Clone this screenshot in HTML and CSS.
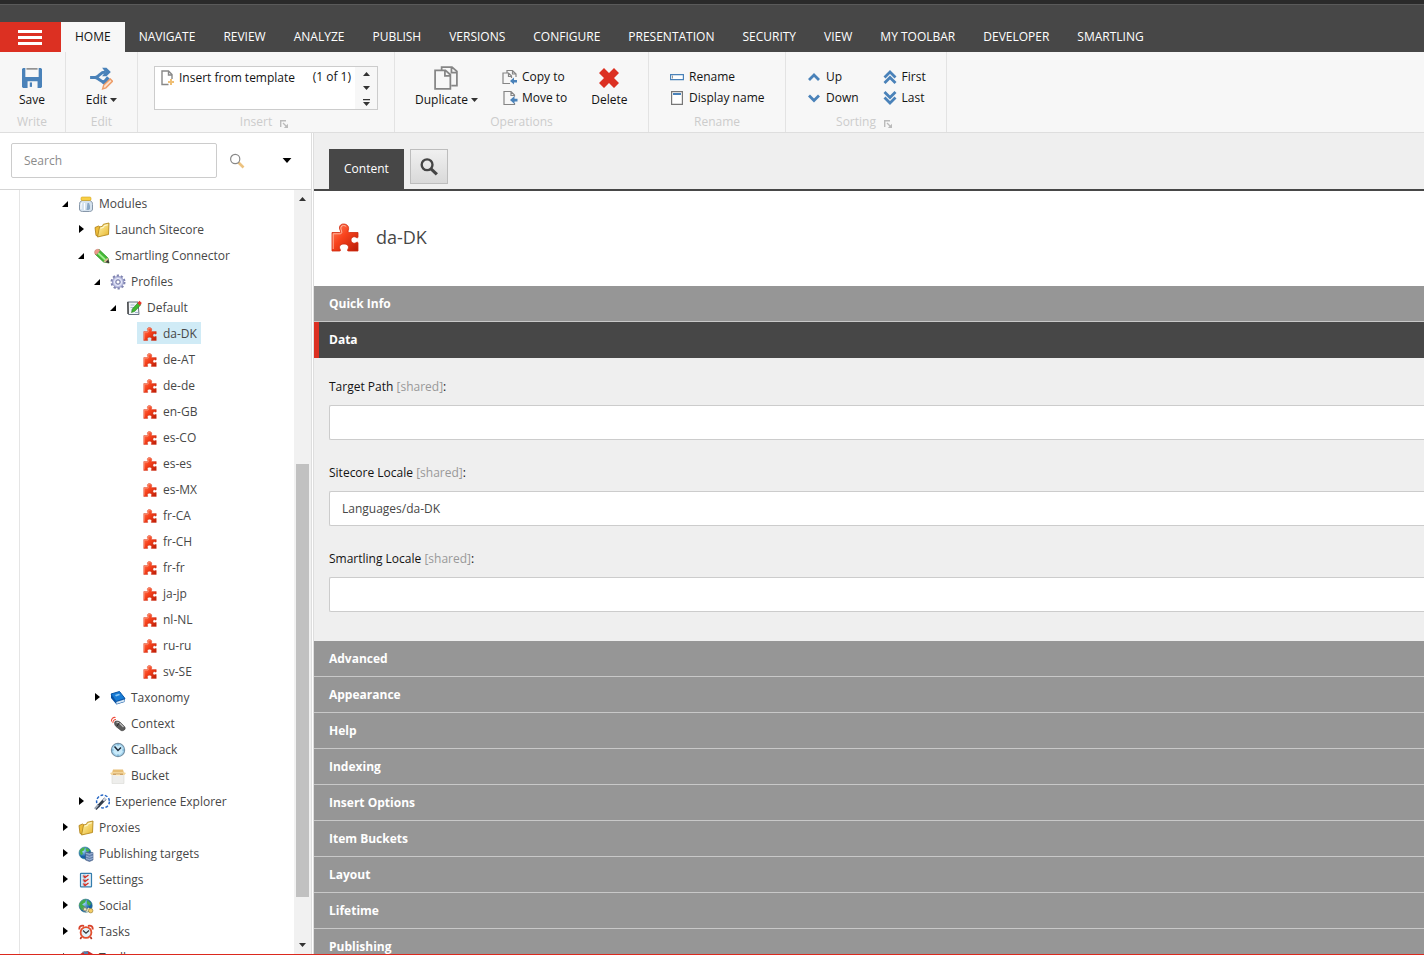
FILE: index.html
```html
<!DOCTYPE html>
<html lang="en">
<head>
<meta charset="utf-8">
<title>Content Editor</title>
<link rel="stylesheet" href="styles.css">
</head>
<body>
<svg class="sprite" aria-hidden="true">
  <defs>
    <linearGradient id="g-red" x1="0" y1="0" x2="1" y2="1"><stop offset="0" stop-color="#ff8663"/><stop offset=".45" stop-color="#f8421c"/><stop offset="1" stop-color="#b81c08"/></linearGradient>
    <linearGradient id="g-yellow" x1="0" y1="0" x2="1" y2="1"><stop offset="0" stop-color="#fff6b0"/><stop offset="1" stop-color="#e8b52c"/></linearGradient>
    <radialGradient id="g-globe" cx=".35" cy=".3"><stop offset="0" stop-color="#a8e0fa"/><stop offset="1" stop-color="#145fa8"/></radialGradient>
  </defs>
  <symbol id="puzzle" viewBox="0 0 28 29"><path d="M1 9.500h7.500c1.200 0 1.200-1 .7-2C7.500 4 9 1 12.500 1s6 2.500 4.800 6c-.5 1.500-.3 2.500 1 2.500H27V14c0 1-1 1-1.800.4-2.200-1.600-5.200 0-5.200 2.600s3 4.200 5.200 2.600c.8-.6 1.800-.6 1.800.4v8h-9.500c-1.200 0-1.200-.8-.6-1.800 1.700-2.700-.4-5.200-3.900-5.200s-5.600 2.500-3.900 5.200c.6 1 .6 1.800-.6 1.800H1z" fill="url(#g-red)" stroke="#cf2a0e" stroke-width=".8"/><path d="M2.200 26V10.800h7c1.600 0 2-1.300 1.300-2.800-1.300-3-.5-5.500 2-5.500 1.300 0 2.200.4 2.800 1.200" fill="none" stroke="#ffb39a" stroke-width="1"/></symbol>
  <symbol id="jar" viewBox="0 0 16 16"><path d="M4 4.500h8c2 1 2.500 2 2.500 4V13c0 1.500-1 2.500-3 2.500h-7c-2 0-3-1-3-2.500V8.500c0-2 .5-3 2.500-4z" fill="#d5e2ee" stroke="#8797a9"/><path d="M9.500 7H11l1 3v3l-1.500 1H8.500z" fill="#8aa8c6"/><path d="M4 6.500L3 9v4M6.500 7v7" stroke="#fff" fill="none"/><rect x="3" y="1" width="10" height="3.500" rx="1.200" fill="#f8cf45" stroke="#d5a51d" stroke-width=".6"/></symbol>
  <symbol id="folder" viewBox="0 0 16 16"><path d="M1 5.500L4.500 4l1.500 1-1 9.500-3-1z" fill="#eebd3a" stroke="#a97b13" stroke-width=".8"/><path d="M5.500 5l3-.8.8-1.900L15 1l-.5 11.500-11 2.500z" fill="url(#g-yellow)" stroke="#b58a1e" stroke-width=".9"/><path d="M6.500 6.200l3-.8.8-1.800 3.500-.8" stroke="#fffbd8" fill="none"/></symbol>
  <symbol id="pencil" viewBox="0 0 16 16"><path d="M5 1.500l9 8.500 1 5-5.500-1L1 6z" fill="#45ba36" stroke="#248b1e" stroke-width=".7"/><path d="M3.500 4.500l8 7.500" stroke="#a3ef91" stroke-width="1.800"/><path d="M1 6C-.5 3 2 .5 5 1.500l1 1L2.200 7z" fill="#eb9a8a" stroke="#b96b5d" stroke-width=".4"/><path d="M9.500 13.700l4-4.200 1.700 5.700z" fill="#dabb91"/><path d="M11.500 14.200l2.800-2.700 1 3.800z" fill="#333"/></symbol>
  <symbol id="gear" viewBox="0 0 16 16"><circle cx="8" cy="8" r="6.400" fill="none" stroke="#7f83b0" stroke-width="2.200" stroke-dasharray="2.200 1.820"/><circle cx="8" cy="8" r="5.600" fill="#c0c4e4" stroke="#8b8fbd" stroke-width=".8"/><circle cx="8" cy="8" r="3.600" fill="none" stroke="#e9ebfa"/><circle cx="8" cy="8" r="2.100" fill="#fff" stroke="#7377a3"/></symbol>
  <symbol id="notepad" viewBox="0 0 16 16"><path d="M1.500 2h10.500l1 12.500H2.500z" fill="#f2f5f8" stroke="#65717e"/><path d="M2 2v12" stroke="#444" stroke-width="1.400"/><path d="M4.500 5h4M4.500 7.500H8M5 10h2M9 12.500h3" stroke="#8faac5" stroke-width=".8"/><path d="M5.500 12.500l1-3.700 5.800-6.300 2.500 2.300-6 6.500z" fill="#40b831" stroke="#217b1c" stroke-width=".6"/><path d="M11.500 3L13.500.8l2.300 2.300-2 2.300z" fill="#e9362a"/></symbol>
  <symbol id="book" viewBox="0 0 16 16"><path d="M1 4l8.500-2.500 5.500 7L6 11.500z" fill="#187cd6" stroke="#0755a5"/><path d="M1 4v4l5.500 6.500 8-2.500.5-3.500-9 3z" fill="#0650a3"/><path d="M6.300 12l8-2.500.2 2-8 2.600z" fill="#d8e8f5"/><path d="M5 5l4-1.200 1 1.300L6 6.400z" fill="#8cc8f5"/></symbol>
  <symbol id="mouse" viewBox="0 0 16 16"><path d="M5 5.500c2-1 4-.5 6 1.500l3.500 3.500c2 2.500-1 5-3.500 4L6 10.500C4.500 9 4 6.500 5 5.500z" fill="#5c5c5c" stroke="#3a3a3a" stroke-width=".6"/><path d="M6.500 6.500c2-.3 3.500.7 4.500 2l2.500 2.500" stroke="#bdbdbd" stroke-width="1.300" fill="none"/><path d="M9.500 6.500L7 10" stroke="#222"/><path d="M1.500 5.500C1 3 3 1 5.500 1.500M3 7c-.5-2 1-3.500 3-3.500" stroke="#ef4d3d" stroke-width="1.100" fill="none"/></symbol>
  <symbol id="clock" viewBox="0 0 16 16"><circle cx="8" cy="8" r="6.600" fill="#c9eafa" stroke="#7490a5" stroke-width="1.200"/><circle cx="8" cy="8" r="5.500" fill="none" stroke="#81c3e8" stroke-width=".7"/><path d="M4.500 4.500L8 8.500l3-3" stroke="#1d2938" stroke-width="1.500" fill="none"/><path d="M8 2.500v1M8 12.500v1M2.500 8h1M12.500 8h1" stroke="#4c88af"/></symbol>
  <symbol id="box" viewBox="0 0 16 16"><path d="M2 6h12v9.500H2z" fill="#eeeeec" stroke="#d8d8d5" stroke-width=".6"/><path d="M3 1.500h10l1 3.500H2z" fill="#e8be74"/><path d="M0 5l3-1h10l3 1-1.500 2H1.500z" fill="#f3d69b"/><path d="M3 5.500h10v1.500H3z" fill="#cfa364"/><path d="M6 6.500h4V8H6z" fill="#fff1ce"/></symbol>
  <symbol id="wand" viewBox="0 0 16 16"><circle cx="9" cy="7.500" r="6.400" fill="none" stroke="#2465c4" stroke-width="1.500" stroke-dasharray="2.800 1.670"/><path d="M1.500 15L11.500 4.500" stroke="#333c4a" stroke-width="2.800"/><path d="M.8 15l3.500-4" stroke="#a7b0bd" stroke-width="1.500"/><path d="M8.500 6l2.500-2.500 1.500 1.300L10 7.500z" fill="#d3d9e5"/></symbol>
  <symbol id="globe-db" viewBox="0 0 16 16"><circle cx="7" cy="7" r="6" fill="url(#g-globe)" stroke="#277c91" stroke-width=".6"/><path d="M1.500 5c1.500-3 3.500-3.500 5.500-3.500L6 4.500l-2 1 1 2-2 2zM8 2l4 2-2 2-2-1z" fill="#49b446"/><path d="M7.500 6.500h7.500V14l-3.500 1.500-4-1.500z" fill="#6582ae" stroke="#41597f" stroke-width=".6"/><path d="M7.500 7l4 1.500L15 7M8 10l3.500 1.300L15 10M8 12.500l3.500 1.200 3.500-1.200" stroke="#a9c1e0" stroke-width=".8" fill="none"/></symbol>
  <symbol id="checks" viewBox="0 0 16 16"><rect x="2.500" y="1.300" width="11" height="13.500" rx=".6" fill="#e2eef8" stroke="#347dad" stroke-width="1.200"/><path d="M5 3h2.500v2.500H5zM5 7h2.500v2.500H5zM5 11h2.500v2.500H5z" fill="#fff" stroke="#87a6bc" stroke-width=".6"/><path d="M5.500 3.500L7 5.500 10.500 3M5.500 7.500L7 9.500 10.500 7M5.500 11.500L7 13.500l3.500-2.500" stroke="#d52f24" stroke-width="1.300" fill="none"/></symbol>
  <symbol id="globe-user" viewBox="0 0 16 16"><circle cx="7.700" cy="7.700" r="6.600" fill="url(#g-globe)" stroke="#35767f" stroke-width=".6"/><path d="M1.200 7c1-4 4-5.500 7-5.500L7 4.500l-3 2 3 2-1 4-3-1zM9 2l4 3-1 3-3-2z" fill="#43ad49"/><path d="M6 11l4 2M9.500 10.500l4 3" stroke="#eee5b1" stroke-width="2.600"/><circle cx="7" cy="11" r="2" fill="none" stroke="#8a8b80"/><circle cx="12.700" cy="12.700" r="2.200" fill="#f6ce65" stroke="#9e8744" stroke-width=".7"/></symbol>
  <symbol id="alarm" viewBox="0 0 16 16"><path d="M1.500 5.500C.8 2.500 3 1 6 2M14.500 5.500C15.200 2.500 13 1 10 2" stroke="#d8422a" stroke-width="1.900" fill="none"/><path d="M3.500 13L2.300 15M12.500 13l1.200 2" stroke="#b52f1c" stroke-width="1.600"/><circle cx="8" cy="8.500" r="5.400" fill="#e0f3fb" stroke="#e2502f" stroke-width="1.800"/><path d="M5 6.500l3 2.700 3-2.700" stroke="#333" stroke-width="1.200" fill="none"/></symbol>
  <symbol id="toolbox" viewBox="0 0 16 16"><path d="M1 5l4-3 5-1 5 3v10H1z" fill="#c9302f"/><path d="M6 1.500h4V5H6z" fill="#4e7fae"/><path d="M4 2.500l3-1" stroke="#7b8ea3" stroke-width="1.200"/></symbol>
  <symbol id="save" viewBox="0 0 18 18"><path fill="#4a82b9" fill-rule="evenodd" d="M0 1l1-1h2v8h12V0h2l1 1v16l-1 1h-3v-6H5v6H1l-1-1z"/><path d="M4 .8h10" stroke="#777" stroke-width="1.200"/><path d="M8 13v4" stroke="#4a82b9" stroke-width="2"/></symbol>
  <symbol id="edit" viewBox="0 0 22 22"><path d="M1 10.500h5c4-1 4-5 9-5M6 10.500c4 1 4 4 8 4" stroke="#4a82b9" stroke-width="2.800" fill="none"/><path d="M12 1.500h4l4 4-4 4h-4l3-4z" fill="#4a82b9"/><path d="M11.500 15.500l5-6 2.500 2-5 6z" fill="#4a82b9"/><path d="M12.500 21l1-3.500 6-5.500 2 2-6 6z" fill="#fbe1cd" stroke="#ed9c67" stroke-width="1.300"/></symbol>
  <symbol id="doc-plus" viewBox="0 0 14 16"><path d="M7.500 14.500H1V1h6.500L11 4.500V9M7.500 1v4H11" fill="none" stroke="#888" stroke-width="1.400"/><path d="M10 9v6M7 12h6" stroke="#efbf75" stroke-width="2"/></symbol>
  <symbol id="copies" viewBox="0 0 22 22"><path d="M7 4V1h9.500L21 5v13h-5M16 1v5h5M1 4h9.500L15 8v13H1zM10 4v5h5" fill="none" stroke="#858585" stroke-width="1.600"/></symbol>
  <symbol id="copy-to" viewBox="0 0 16 16"><path d="M5 3.500V1.500h5.500L14 5v3M10.500 1.500V5H14M8 14.500H1V4h5.500l3 3v2M6.500 4v3.500H9.500" fill="none" stroke="#858585" stroke-width="1.200"/><path d="M8 12l4-3.500V11h3v2.500h-3v2z" fill="#4a82b9"/></symbol>
  <symbol id="move-to" viewBox="0 0 16 16"><path d="M12.500 13v1.500H2v-13h7L12.500 5v1.500M9 1.500v4h3.500" fill="none" stroke="#858585" stroke-width="1.200"/><path d="M8 10l4.500-4v2.700h3v2.800h-3V14z" fill="#4a82b9"/></symbol>
  <symbol id="delete" viewBox="0 0 20 20"><path d="M5 0l5 5 5-5 5 5-5 5 5 5-5 5-5-5-5 5-5-5 5-5-5-5z" fill="#dc3022"/></symbol>
  <symbol id="rename" viewBox="0 0 14 14"><path d="M.6 4.600h12.800v5H.6z" fill="#fff" stroke="#4a82b9" stroke-width="1.200"/><path d="M2.500 5.500v3" stroke="#999"/></symbol>
  <symbol id="display" viewBox="0 0 14 14"><path d="M1.600.6h10.800v12.800H1.600z" fill="#fff" stroke="#777" stroke-width="1.200"/><path d="M3 3h8" stroke="#4a82b9" stroke-width="2"/></symbol>
  <symbol id="up" viewBox="0 0 14 14"><path d="M2 10l5-5 5 5" fill="none" stroke="#4a82b9" stroke-width="2.800"/></symbol>
  <symbol id="down" viewBox="0 0 14 14"><path d="M2 4.500l5 5 5-5" fill="none" stroke="#4a82b9" stroke-width="2.800"/></symbol>
  <symbol id="first" viewBox="0 0 14 14"><path d="M1.500 7.500L7 2l5.500 5.500M1.500 13L7 7.500l5.500 5.500" fill="none" stroke="#4a82b9" stroke-width="2.800"/></symbol>
  <symbol id="last" viewBox="0 0 14 14"><path d="M1.500 1L7 6.500 12.500 1M1.500 6.500L7 12l5.500-5.500" fill="none" stroke="#4a82b9" stroke-width="2.800"/></symbol>
  <symbol id="launch" viewBox="0 0 8 8"><path d="M.7 7V.7H6" fill="none" stroke="#bbb" stroke-width="1.400"/><path d="M3 3l4 4" stroke="#bbb" stroke-width="1.300"/><path d="M8 3.800V8H3.800z" fill="#bbb"/></symbol>
  <symbol id="caret" viewBox="0 0 7 4"><path d="M0 0h7L3.500 4z"/></symbol>
  <symbol id="caret-up" viewBox="0 0 7 4"><path d="M0 4h7L3.500 0z"/></symbol>
  <symbol id="caret-more" viewBox="0 0 7 7"><path d="M0 0h7v1.200H0zM0 3h7L3.500 7z"/></symbol>
  <symbol id="open" viewBox="0 0 6 6"><path d="M6 0v6H0z"/></symbol>
  <symbol id="closed" viewBox="0 0 5 8"><path d="M0 0l5 4-5 4z"/></symbol>
  <symbol id="find" viewBox="0 0 16 16"><path d="M9.500 9.500l5 5" stroke="#ecc27f" stroke-width="2.600"/><circle cx="6.200" cy="6" r="4.600" fill="#fff" stroke="#888" stroke-width="1.200"/></symbol>
  <symbol id="find-dark" viewBox="0 0 16 16"><path d="M9.500 9.500l5.500 5" stroke="#444" stroke-width="2.800"/><circle cx="6.300" cy="6" r="4.800" fill="none" stroke="#444" stroke-width="2.100"/></symbol>
</svg>

<header class="top">
  <nav class="tabs">
    <button class="menu" aria-label="Menu"><span></span><span></span><span></span></button>
    <a class="tab active" href="#">HOME</a>
    <a class="tab" href="#">NAVIGATE</a>
    <a class="tab" href="#">REVIEW</a>
    <a class="tab" href="#">ANALYZE</a>
    <a class="tab" href="#">PUBLISH</a>
    <a class="tab" href="#">VERSIONS</a>
    <a class="tab" href="#">CONFIGURE</a>
    <a class="tab" href="#">PRESENTATION</a>
    <a class="tab" href="#">SECURITY</a>
    <a class="tab" href="#">VIEW</a>
    <a class="tab" href="#">MY TOOLBAR</a>
    <a class="tab" href="#">DEVELOPER</a>
    <a class="tab" href="#">SMARTLING</a>
  </nav>
</header>

<div class="ribbon">
  <section class="group write">
    <div class="tools"><button class="big"><svg class="i-big save-icon"><use href="#save"/></svg><span>Save</span></button></div>
    <h2>Write</h2>
  </section>
  <section class="group edit">
    <div class="tools"><button class="big"><svg class="i-big"><use href="#edit"/></svg><span>Edit <svg class="caret"><use href="#caret"/></svg></span></button></div>
    <h2>Edit</h2>
  </section>
  <section class="group insert">
    <div class="tools">
      <div class="gallery">
        <button class="template"><svg class="i-doc"><use href="#doc-plus"/></svg>Insert from template</button>
        <span class="count">(1 of 1)</span>
        <div class="gallery-nav">
          <button aria-label="Previous"><svg class="caret"><use href="#caret-up"/></svg></button>
          <button aria-label="Next"><svg class="caret"><use href="#caret"/></svg></button>
          <button aria-label="More"><svg class="caret more"><use href="#caret-more"/></svg></button>
        </div>
      </div>
    </div>
    <h2>Insert <svg class="launch"><use href="#launch"/></svg></h2>
  </section>
  <section class="group operations">
    <div class="tools">
      <button class="big"><svg class="i-big"><use href="#copies"/></svg><span>Duplicate <svg class="caret"><use href="#caret"/></svg></span></button>
      <div class="stack">
        <button class="small"><svg class="i-16"><use href="#copy-to"/></svg>Copy to</button>
        <button class="small"><svg class="i-16"><use href="#move-to"/></svg>Move to</button>
      </div>
      <button class="big"><svg class="i-big delete-icon"><use href="#delete"/></svg><span>Delete</span></button>
    </div>
    <h2>Operations</h2>
  </section>
  <section class="group rename">
    <div class="tools">
      <div class="stack">
        <button class="small"><svg class="i-14"><use href="#rename"/></svg>Rename</button>
        <button class="small"><svg class="i-14"><use href="#display"/></svg>Display name</button>
      </div>
    </div>
    <h2>Rename</h2>
  </section>
  <section class="group sorting">
    <div class="tools">
      <div class="stack">
        <button class="small"><svg class="i-14"><use href="#up"/></svg>Up</button>
        <button class="small"><svg class="i-14"><use href="#down"/></svg>Down</button>
      </div>
      <div class="stack">
        <button class="small"><svg class="i-14"><use href="#first"/></svg>First</button>
        <button class="small"><svg class="i-14"><use href="#last"/></svg>Last</button>
      </div>
    </div>
    <h2>Sorting <svg class="launch"><use href="#launch"/></svg></h2>
  </section>
</div>

<div class="workspace">
  <aside class="sidebar">
    <form class="search">
      <input type="text" placeholder="Search" aria-label="Search">
      <button type="button" class="find" aria-label="Find"><svg class="i-16"><use href="#find"/></svg></button>
      <button type="button" class="options" aria-label="Search options"><svg class="caret wide"><use href="#caret"/></svg></button>
    </form>
    <div class="tree-area">
      <div class="tree-pane">
        <ul class="tree">
          <li><div class="row"><svg class="twist"><use href="#open"/></svg><a href="#"><svg><use href="#jar"/></svg>Modules</a></div>
            <ul>
              <li><div class="row"><svg class="twist shut"><use href="#closed"/></svg><a href="#"><svg><use href="#folder"/></svg>Launch Sitecore</a></div></li>
              <li><div class="row"><svg class="twist"><use href="#open"/></svg><a href="#"><svg><use href="#pencil"/></svg>Smartling Connector</a></div>
                <ul>
                  <li><div class="row"><svg class="twist"><use href="#open"/></svg><a href="#"><svg><use href="#gear"/></svg>Profiles</a></div>
                    <ul>
                      <li><div class="row"><svg class="twist"><use href="#open"/></svg><a href="#"><svg><use href="#notepad"/></svg>Default</a></div>
                        <ul class="locales">
                          <li><div class="row leaf"><a class="selected" href="#"><svg><use href="#puzzle"/></svg>da-DK</a></div></li>
                          <li><div class="row leaf"><a href="#"><svg><use href="#puzzle"/></svg>de-AT</a></div></li>
                          <li><div class="row leaf"><a href="#"><svg><use href="#puzzle"/></svg>de-de</a></div></li>
                          <li><div class="row leaf"><a href="#"><svg><use href="#puzzle"/></svg>en-GB</a></div></li>
                          <li><div class="row leaf"><a href="#"><svg><use href="#puzzle"/></svg>es-CO</a></div></li>
                          <li><div class="row leaf"><a href="#"><svg><use href="#puzzle"/></svg>es-es</a></div></li>
                          <li><div class="row leaf"><a href="#"><svg><use href="#puzzle"/></svg>es-MX</a></div></li>
                          <li><div class="row leaf"><a href="#"><svg><use href="#puzzle"/></svg>fr-CA</a></div></li>
                          <li><div class="row leaf"><a href="#"><svg><use href="#puzzle"/></svg>fr-CH</a></div></li>
                          <li><div class="row leaf"><a href="#"><svg><use href="#puzzle"/></svg>fr-fr</a></div></li>
                          <li><div class="row leaf"><a href="#"><svg><use href="#puzzle"/></svg>ja-jp</a></div></li>
                          <li><div class="row leaf"><a href="#"><svg><use href="#puzzle"/></svg>nl-NL</a></div></li>
                          <li><div class="row leaf"><a href="#"><svg><use href="#puzzle"/></svg>ru-ru</a></div></li>
                          <li><div class="row leaf"><a href="#"><svg><use href="#puzzle"/></svg>sv-SE</a></div></li>
                        </ul>
                      </li>
                    </ul>
                  </li>
                  <li><div class="row"><svg class="twist shut"><use href="#closed"/></svg><a href="#"><svg><use href="#book"/></svg>Taxonomy</a></div></li>
                  <li><div class="row leaf"><a href="#"><svg><use href="#mouse"/></svg>Context</a></div></li>
                  <li><div class="row leaf"><a href="#"><svg><use href="#clock"/></svg>Callback</a></div></li>
                  <li><div class="row leaf"><a href="#"><svg><use href="#box"/></svg>Bucket</a></div></li>
                </ul>
              </li>
              <li><div class="row"><svg class="twist shut"><use href="#closed"/></svg><a href="#"><svg><use href="#wand"/></svg>Experience Explorer</a></div></li>
            </ul>
          </li>
          <li><div class="row"><svg class="twist shut"><use href="#closed"/></svg><a href="#"><svg><use href="#folder"/></svg>Proxies</a></div></li>
          <li><div class="row"><svg class="twist shut"><use href="#closed"/></svg><a href="#"><svg><use href="#globe-db"/></svg>Publishing targets</a></div></li>
          <li><div class="row"><svg class="twist shut"><use href="#closed"/></svg><a href="#"><svg><use href="#checks"/></svg>Settings</a></div></li>
          <li><div class="row"><svg class="twist shut"><use href="#closed"/></svg><a href="#"><svg><use href="#globe-user"/></svg>Social</a></div></li>
          <li><div class="row"><svg class="twist shut"><use href="#closed"/></svg><a href="#"><svg><use href="#alarm"/></svg>Tasks</a></div></li>
          <li><div class="row"><svg class="twist shut"><use href="#closed"/></svg><a href="#"><svg><use href="#toolbox"/></svg>Toolbox</a></div></li>
        </ul>
      </div>
      <div class="scrollbar">
        <svg class="caret"><use href="#caret-up"/></svg>
        <div class="track"><div class="thumb"></div></div>
        <svg class="caret"><use href="#caret"/></svg>
      </div>
    </div>
  </aside>

  <main class="editor">
    <div class="editor-tabs">
      <a class="editor-tab" href="#">Content</a>
      <button class="editor-find" aria-label="Search"><svg class="i-find"><use href="#find-dark"/></svg></button>
    </div>
    <div class="title">
      <svg class="i-title"><use href="#puzzle"/></svg>
      <h1>da-DK</h1>
    </div>
    <button class="section">Quick Info</button>
    <button class="section current">Data</button>
    <div class="fields">
      <div class="field"><label for="path">Target Path <span>[shared]</span>:</label><input id="path" type="text"></div>
      <div class="field"><label for="locale">Sitecore Locale <span>[shared]</span>:</label><input id="locale" type="text" value="Languages/da-DK"></div>
      <div class="field"><label for="smartling">Smartling Locale <span>[shared]</span>:</label><input id="smartling" type="text"></div>
    </div>
    <button class="section">Advanced</button>
    <button class="section">Appearance</button>
    <button class="section">Help</button>
    <button class="section">Indexing</button>
    <button class="section">Insert Options</button>
    <button class="section">Item Buckets</button>
    <button class="section">Layout</button>
    <button class="section">Lifetime</button>
    <button class="section">Publishing</button>
  </main>
</div>
</body>
</html>
```
FILE: styles.css
```css
* { box-sizing: border-box; }

body {
  margin: 0;
  height: 100vh;
  display: flex;
  flex-direction: column;
  overflow: hidden;
  border-bottom: 1px solid #dc291e;
  font: 12px/16px "Open Sans", sans-serif;
  color: #131313;
  background: #fff;
}

button, input { font: inherit; color: inherit; }
button { border: 0; padding: 0; margin: 0; background: none; }
a { color: inherit; text-decoration: none; }
svg { flex: none; display: block; }
.sprite { position: absolute; width: 0; height: 0; }

.caret { width: 7px; height: 4px; fill: #333; }
.caret.more { height: 7px; }
.caret.wide { width: 10px; height: 5px; fill: #000; }

/* Header tabs */
.top {
  flex: none;
  padding-top: 17px;
  background: #474747;
  border-top: 4px solid #2a2a2a;
  box-shadow: inset 0 1px #5a5a5a;
}
.tabs { display: flex; height: 31px; padding-top: 1px; }
.menu {
  width: 61px;
  padding-right: 2px;
  background: #dc3022;
  display: flex;
  flex-direction: column;
  align-items: center;
  justify-content: center;
  gap: 3px;
}
.menu span { width: 24px; height: 3px; background: #fff; }
.tab { padding: 0 14px; line-height: 30px; color: #fff; }
.tab.active { background: #f7f7f7; color: #131313; }

/* Ribbon */
.ribbon {
  flex: none;
  display: flex;
  height: 81px;
  background: #f7f7f7;
  border-bottom: 1px solid #dedede;
}
.group {
  display: flex;
  flex-direction: column;
  border-right: 1px solid #e3e3e3;
}
.group h2 {
  margin: 0;
  height: 20px;
  display: flex;
  justify-content: center;
  align-items: center;
  gap: 8px;
  font-size: 12px;
  line-height: 16px;
  font-weight: 400;
  color: #ccc;
}
.tools { display: flex; height: 60px; padding-top: 14px; }
.launch { width: 8px; height: 8px; margin: 4px 4px 0 0; }
.write { width: 66px; }
.edit { width: 72px; }
.insert { width: 257px; }
.operations { width: 254px; }
.rename { width: 137px; }
.sorting { width: 161px; }
.write .tools, .edit .tools { justify-content: center; }
.insert .tools { padding-left: 16px; }
.operations .tools { padding-left: 20px; }
.rename .tools { padding-left: 21px; }
.sorting .tools { padding-left: 21px; gap: 24px; }

.big {
  display: flex;
  flex-direction: column;
  align-items: center;
  gap: 2px;
  height: 44px;
}
.write .big, .write h2 { padding-right: 1px; }
.big span { display: flex; align-items: center; gap: 3px; }
.i-big { width: 24px; height: 24px; }
.save-icon, .delete-icon { padding: 2px; }
.stack { display: flex; flex-direction: column; gap: 5px; padding-top: 3px; }
.operations .stack { margin: 0 24px; }
.small { display: flex; align-items: center; gap: 4px; height: 16px; }
.i-16 { width: 16px; height: 16px; }
.i-14 { width: 14px; height: 14px; }
.rename .small, .sorting .small { gap: 5px; }

.gallery {
  display: flex;
  width: 224px;
  height: 44px;
  background: #fff;
  border: 1px solid #ccc;
}
.template {
  display: flex;
  align-items: center;
  gap: 4px;
  height: 16px;
  margin-top: 3px;
  padding-left: 6px;
}
.i-doc { width: 14px; height: 16px; }
.count { margin: 2px 4px 0 auto; }
.gallery-nav {
  width: 22px;
  display: flex;
  flex-direction: column;
  background: #f7f7f7;
}
.gallery-nav button { flex: 1; display: grid; place-items: center; }

/* Content tree */
.workspace { flex: 1; min-height: 0; display: flex; }
.sidebar {
  width: 314px;
  flex: none;
  display: flex;
  flex-direction: column;
  border-right: 3px double #dedede;
}
.search {
  flex: none;
  display: flex;
  align-items: center;
  height: 57px;
  padding-left: 11px;
  padding-bottom: 1px;
  border-bottom: 1px solid #d5d5d5;
}
.search input {
  width: 206px;
  height: 35px;
  padding: 0 12px;
  border: 1px solid #ccc;
  border-radius: 2px;
}
.search input::placeholder { color: #8b8b8b; opacity: 1; }
.find { margin-left: 12px; }
.options { margin-left: 37px; }
.tree-area { flex: 1; min-height: 0; display: flex; }
.tree-pane {
  flex: 1;
  min-width: 0;
  overflow: hidden;
  margin-left: 19px;
  padding-left: 37px;
  border-left: 1px solid #e5e5e5;
}
.tree, .tree ul { list-style: none; margin: 0; padding: 0; }
.tree ul { padding-left: 16px; }
.row { display: flex; align-items: center; height: 26px; color: #474747; }
.row.leaf { padding-left: 16px; }
.row a {
  display: flex;
  align-items: center;
  gap: 5px;
  height: 22px;
  padding: 2px 4px 0 5px;
  white-space: nowrap;
}
.row a svg { width: 16px; height: 16px; }
.locales .row a svg { padding: 1px; }
.row a.selected { background: #d0ebf6; }
.twist { width: 6px; height: 6px; margin: 2px 5px 0; }
.twist.shut { width: 5px; height: 8px; margin: 0 5px 0 6px; }
.scrollbar {
  width: 17px;
  display: flex;
  flex-direction: column;
  align-items: center;
  padding: 7px 0;
  background: #f1f1f1;
}
.track { flex: 1; width: 13px; padding-top: 263px; }
.thumb { height: 433px; background: #c1c1c1; }

/* Item editor */
.editor {
  flex: 1;
  min-width: 0;
  overflow: hidden;
  display: flex;
  flex-direction: column;
  background: #efefef;
}
.editor > * { flex: none; }
.editor-tabs {
  display: flex;
  gap: 6px;
  height: 58px;
  padding: 16px 0 0 15px;
  border-bottom: 2px solid #474747;
}
.editor-tab {
  padding: 0 15px;
  background: #474747;
  color: #fff;
  line-height: 40px;
}
.editor-find {
  display: grid;
  place-items: center;
  width: 38px;
  height: 35px;
  border: 1px solid #bdbdbd;
  background: linear-gradient(#f0f0f0, #d9d9d9);
}
.i-find { width: 18px; height: 18px; }
.title {
  display: flex;
  align-items: center;
  gap: 17px;
  height: 95px;
  padding: 0 0 3px 17px;
  background: #fff;
}
.i-title { width: 28px; height: 29px; }
.title h1 {
  margin: 0;
  font-size: 18px;
  line-height: 24px;
  font-weight: 400;
  color: #474747;
}
.section {
  height: 36px;
  padding: 0 15px;
  border-bottom: 1px solid #c8c8c8;
  background: #969696;
  color: #fff;
  font-weight: 700;
  text-align: left;
}
.section.current {
  padding-left: 10px;
  border-left: 5px solid #dc3022;
  border-bottom: 0;
  background: #474747;
}
.fields {
  display: flex;
  flex-direction: column;
  gap: 25px;
  padding: 21px 0 29px 15px;
}
.field { display: flex; flex-direction: column; gap: 10px; }
.field span { color: #999; }
.field input {
  width: 100%;
  height: 35px;
  padding: 0 12px;
  border: 1px solid #ccc;
  border-right: 0;
  border-radius: 2px 0 0 2px;
  background: #fff;
  color: #474747;
}
```
